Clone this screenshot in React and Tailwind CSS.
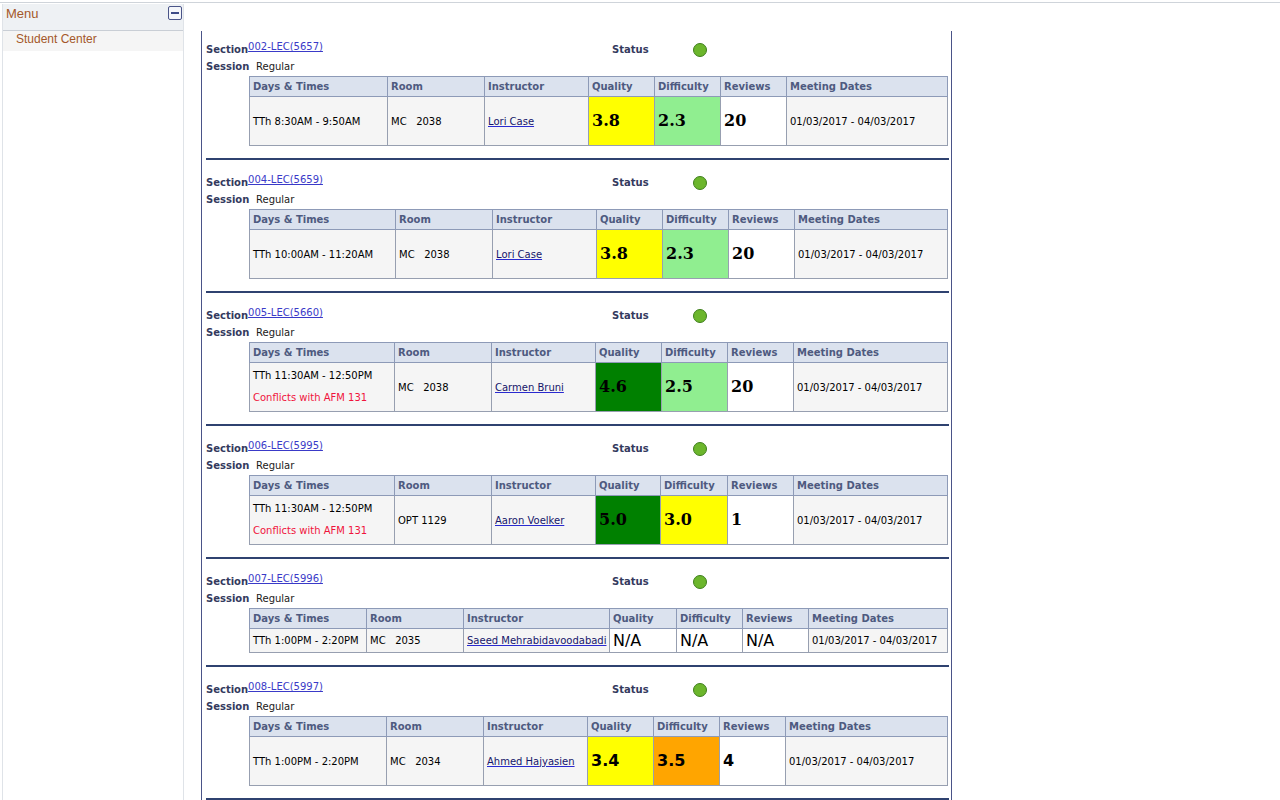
import React from 'react';

const sections = [
  {
    id: '002-LEC(5657)',
    days: 'TTh 8:30AM - 9:50AM',
    room: 'MC\u00a0\u00a0\u00a02038',
    instructor: 'Lori Case',
    quality: '3.8', qBg: 'bg-[#ffff00]',
    difficulty: '2.3', dBg: 'bg-[#90ee90]',
    reviews: '20',
    cols: ['w-[138px]', 'w-[97px]', 'w-[104px]', 'w-[66px]', 'w-[66px]', 'w-[66px]'],
    body: 'h-[49px]', num: 'serif', first: true,
  },
  {
    id: '004-LEC(5659)',
    days: 'TTh 10:00AM - 11:20AM',
    room: 'MC\u00a0\u00a0\u00a02038',
    instructor: 'Lori Case',
    quality: '3.8', qBg: 'bg-[#ffff00]',
    difficulty: '2.3', dBg: 'bg-[#90ee90]',
    reviews: '20',
    cols: ['w-[146px]', 'w-[97px]', 'w-[104px]', 'w-[66px]', 'w-[66px]', 'w-[66px]'],
    body: 'h-[49px]', num: 'serif',
  },
  {
    id: '005-LEC(5660)',
    days: 'TTh 11:30AM - 12:50PM',
    conflict: 'Conflicts with AFM 131',
    room: 'MC\u00a0\u00a0\u00a02038',
    instructor: 'Carmen Bruni',
    quality: '4.6', qBg: 'bg-[#008000]',
    difficulty: '2.5', dBg: 'bg-[#90ee90]',
    reviews: '20',
    cols: ['w-[145px]', 'w-[97px]', 'w-[104px]', 'w-[66px]', 'w-[66px]', 'w-[66px]'],
    body: 'h-[49px]', num: 'serif',
  },
  {
    id: '006-LEC(5995)',
    days: 'TTh 11:30AM - 12:50PM',
    conflict: 'Conflicts with AFM 131',
    room: 'OPT 1129',
    instructor: 'Aaron Voelker',
    quality: '5.0', qBg: 'bg-[#008000]',
    difficulty: '3.0', dBg: 'bg-[#ffff00]',
    reviews: '1',
    cols: ['w-[145px]', 'w-[97px]', 'w-[104px]', 'w-[65px]', 'w-[67px]', 'w-[66px]'],
    body: 'h-[49px]', num: 'serif',
  },
  {
    id: '007-LEC(5996)',
    days: 'TTh 1:00PM - 2:20PM',
    room: 'MC\u00a0\u00a0\u00a02035',
    instructor: 'Saeed Mehrabidavoodabadi',
    quality: 'N/A', qBg: 'bg-white',
    difficulty: 'N/A', dBg: 'bg-white',
    reviews: 'N/A',
    cols: ['w-[117px]', 'w-[97px]', 'w-[146px]', 'w-[67px]', 'w-[66px]', 'w-[66px]'],
    body: 'h-[24px]', num: 'na',
  },
  {
    id: '008-LEC(5997)',
    days: 'TTh 1:00PM - 2:20PM',
    room: 'MC\u00a0\u00a0\u00a02034',
    instructor: 'Ahmed Hajyasien',
    quality: '3.4', qBg: 'bg-[#ffff00]',
    difficulty: '3.5', dBg: 'bg-[#ffa500]',
    reviews: '4',
    cols: ['w-[137px]', 'w-[97px]', 'w-[104px]', 'w-[66px]', 'w-[66px]', 'w-[66px]'],
    body: 'h-[49px]', num: 'sans',
  },
];

const numClass = {
  serif: "font-['DejaVu_Serif',serif] font-bold text-[16px] leading-[20px]",
  sans: "font-['DejaVu_Sans',sans-serif] font-bold text-[16px] leading-[20px]",
  na: "font-['DejaVu_Sans',sans-serif] font-normal text-[16px] leading-[18px]",
};

const headers = ['Days & Times', 'Room', 'Instructor', 'Quality', 'Difficulty', 'Reviews', 'Meeting Dates'];

function Section({ s }) {
  const cell = 'border border-[#979fb0] px-[3px] align-middle whitespace-nowrap';
  return (
    <div className={s.first ? 'pt-[10px]' : 'pt-[14px]'}>
      <div className="flex h-[17px] items-center text-[10px]">
        <div className="flex w-[406px] shrink-0 items-center">
          <span className="font-bold text-[#343a5e]">Section</span>
          <a href="#" className="relative -top-[3px] text-[#3a3ac8] underline">{s.id}</a>
        </div>
        <span className="w-[81px] shrink-0 font-bold text-[#343a5e]">Status</span>
        <span className="h-[14px] w-[14px] rounded-full border border-[#3f7f1c] bg-[#6cb62c]" />
      </div>
      <div className="flex h-[18px] items-start pt-[1px] text-[10px]">
        <span className="w-[50px] shrink-0 font-bold text-[#343a5e]">Session</span>
        <span className="text-[#1a1a1a]">Regular</span>
      </div>
      <table className="ml-[43px] mb-[12px] w-[699px] table-fixed border-collapse border border-[#b7c1d5] text-[10px]">
        <colgroup>
          {s.cols.map((c, i) => (
            <col key={i} className={c} />
          ))}
          <col />
        </colgroup>
        <thead>
          <tr className="h-[20px]">
            {headers.map((h) => (
              <th key={h} className="border border-[#8d9ab7] bg-[#dbe2ee] px-[3px] text-left font-bold text-[#4e5a80]">
                {h}
              </th>
            ))}
          </tr>
        </thead>
        <tbody>
          <tr className={s.body}>
            <td className={`${cell} bg-[#f5f5f5] text-black`}>
              {s.conflict ? (
                <div className="leading-[22px]">
                  <div>{s.days}</div>
                  <div className="text-[#f0143c]">{s.conflict}</div>
                </div>
              ) : (
                s.days
              )}
            </td>
            <td className={`${cell} bg-[#f5f5f5] text-black`}>{s.room}</td>
            <td className={`${cell} bg-[#f5f5f5]`}>
              <a href="#" className="text-[#16166a] underline decoration-[#2a2ad0]">{s.instructor}</a>
            </td>
            <td className={`${cell} ${s.qBg} text-black ${numClass[s.num]}`}>{s.quality}</td>
            <td className={`${cell} ${s.dBg} text-black ${numClass[s.num]}`}>{s.difficulty}</td>
            <td className={`${cell} bg-white text-black ${numClass[s.num]}`}>{s.reviews}</td>
            <td className={`${cell} bg-[#f5f5f5] text-black`}>01/03/2017 - 04/03/2017</td>
          </tr>
        </tbody>
      </table>
      <div className="h-[2px] bg-[#2f4270]" />
    </div>
  );
}

export default function App() {
  return (
    <div className="h-[800px] w-[1280px] overflow-hidden bg-white font-['DejaVu_Sans',sans-serif]">
      <div className="h-[2px]" />
      <div className="border-t border-[#cfd4da]" />
      <div className="flex">
        {/* Left menu */}
        <aside className="ml-[2px] mt-[1px] h-[797px] w-[182px] shrink-0 border-x border-[#dfe3e8] font-['Liberation_Sans',sans-serif]">
          <div className="flex h-[27px] items-start justify-between border-b border-[#c9ced5] bg-[#eef1f4] pl-[3px] pr-[1px] pt-[1px]">
            <span className="text-[13px] leading-[18px] text-[#a4582a]">Menu</span>
            <span className="mt-[1px] flex h-[14px] w-[14px] items-center justify-center rounded-[2px] border border-[#4a5488] bg-[#f4f6fa]">
              <span className="h-[2px] w-[8px] bg-[#3c4a86]" />
            </span>
          </div>
          <div className="h-[20px] bg-[#f5f5f5] pl-[13px] pt-[1px] text-[12px] leading-[14px] text-[#a4582a]">
            Student Center
          </div>
        </aside>

        {/* Class sections */}
        <main className="ml-[17px] mt-[28px] h-[772px] w-[751px] shrink-0 border-x border-[#4a5488] pl-[4px] pr-[2px]">
          {sections.map((s) => (
            <Section key={s.id} s={s} />
          ))}
        </main>
      </div>
    </div>
  );
}
